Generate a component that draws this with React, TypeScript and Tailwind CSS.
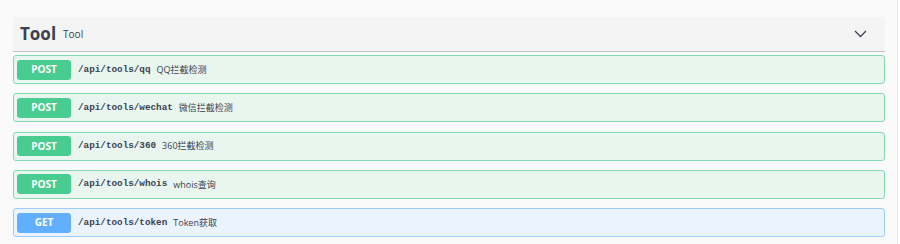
import React from "react";

type Op = {
  method: "POST" | "GET";
  path: string;
  summary: string;
};

const ops: Op[] = [
  { method: "POST", path: "/api/tools/qq", summary: "QQ拦截检测" },
  { method: "POST", path: "/api/tools/wechat", summary: "微信拦截检测" },
  { method: "POST", path: "/api/tools/360", summary: "360拦截检测" },
  { method: "POST", path: "/api/tools/whois", summary: "whois查询" },
  { method: "GET", path: "/api/tools/token", summary: "Token获取" },
];

const OpRow = ({ op }: { op: Op }) => {
  const isPost = op.method === "POST";
  return (
    <div
      className={
        isPost
          ? "flex items-center h-[29px] px-[3px] border border-[#84d9b2] bg-[#e8f6ef] rounded-[3px]"
          : "flex items-center h-[29px] px-[3px] border border-[#9ecbf8] bg-[#ebf3fc] rounded-[3px]"
      }
    >
      <span
        className={
          isPost
            ? "w-[54px] h-[20px] flex items-center justify-center rounded-[3px] bg-[#49cc90] text-white text-[10px] font-bold"
            : "w-[54px] h-[20px] flex items-center justify-center rounded-[3px] bg-[#61affe] text-white text-[10px] font-bold"
        }
        style={{ fontFamily: '"Open Sans", sans-serif' }}
      >
        {op.method}
      </span>
      <span
        className="ml-[7px] text-[9.3px] font-bold text-[#3b4151]"
        style={{ fontFamily: '"Liberation Mono", monospace' }}
      >
        {op.path}
      </span>
      <span
        className="ml-[6px] text-[9px] text-[#3b4151]"
        style={{ fontFamily: '"Open Sans", "Noto Sans CJK SC", sans-serif' }}
      >
        {op.summary}
      </span>
    </div>
  );
};

export default function App() {
  return (
    <div className="w-[898px] h-[244px] bg-[#fafafa] border-r border-[#ececec] pl-[13px] pr-[12px] pt-[17px]">
      <div className="flex items-center h-[35px] bg-[#f4f4f4] border-b border-[#c4c4c6] pl-[7px] pr-[18px]">
        <span
          className="text-[17px] font-bold text-[#3b4151]"
          style={{ fontFamily: '"Open Sans", sans-serif' }}
        >
          Tool
        </span>
        <span
          className="ml-[7px] text-[10px] text-[#3b4151]"
          style={{ fontFamily: '"Open Sans", sans-serif' }}
        >
          Tool
        </span>
        <svg className="ml-auto" width="13" height="8" viewBox="0 0 13 8" fill="none">
          <path d="M1 1l5.5 5.5L12 1" stroke="#3b4151" strokeWidth="1.3" />
        </svg>
      </div>
      <div className="mt-[3px] flex flex-col gap-[9.25px]">
        {ops.map((op) => (
          <OpRow key={op.path} op={op} />
        ))}
      </div>
    </div>
  );
}
